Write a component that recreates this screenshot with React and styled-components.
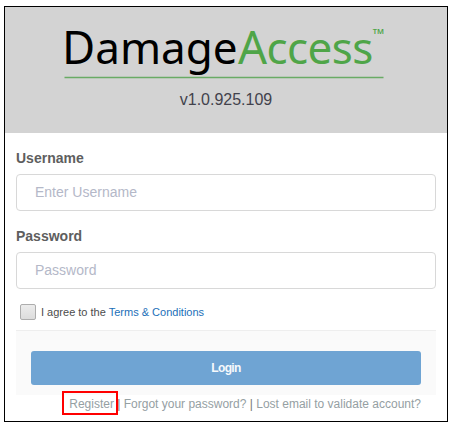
import React from "react";
import styled, { createGlobalStyle } from "styled-components";

const GlobalStyle = createGlobalStyle`
  *, *::after { box-sizing: border-box; }
  body {
    margin: 0;
    background: #fff;
    font-family: "Liberation Sans", Arial, sans-serif;
  }
`;

const Frame = styled.main`
  width: 444px;
  height: 416px;
  margin: 6px 0 0 4px;
  border: 1px solid #000;
  background: #fff;
`;

const Header = styled.header`
  height: 126px;
  background: #d3d3d3;
  display: flex;
  flex-direction: column;
  align-items: center;
`;

const Logo = styled.svg`
  display: block;
  width: 442px;
  height: 78px;
  font-family: "Noto Sans", "Open Sans", sans-serif;
`;

const Version = styled.div`
  margin-top: 5px;
  font-size: 16px;
  line-height: 20px;
  color: #42424c;
`;

const Form = styled.form`
  display: flex;
  flex-direction: column;
  padding: 16px 11px 0;
`;

const Field = styled.label`
  display: flex;
  flex-direction: column;
  height: 78px;
`;

const FieldName = styled.span`
  height: 25px;
  font-size: 14px;
  font-weight: 700;
  line-height: 18px;
  color: #5e5e5e;
`;

const Input = styled.input`
  width: 420px;
  height: 37px;
  padding: 0 18px 2px;
  border: 1px solid #d8d8d8;
  border-radius: 4px;
  background: #fff;
  font-family: inherit;
  font-size: 14px;
  color: #555;
  outline: none;

  &::placeholder {
    color: #b4b8c8;
    opacity: 1;
  }
`;

const Agreement = styled.label`
  display: flex;
  align-items: center;
  gap: 5px;
  height: 16px;
  margin: -1px 0 10px 4px;
  font-size: 11px;
  line-height: 16px;
  color: #4c4c4c;
`;

const Checkbox = styled.input`
  appearance: none;
  width: 16px;
  height: 16px;
  margin: 0;
  border: 1px solid #adadad;
  border-radius: 2px;
  background: linear-gradient(#ececec, #dcdcdc);
`;

const Terms = styled.a`
  color: #1b6fb8;
`;

const Actions = styled.div`
  height: 65px;
  padding: 20px 15px 0;
  border-top: 1px solid #eee;
  background: #fafafa;
`;

const LoginButton = styled.button`
  display: block;
  width: 100%;
  height: 34px;
  padding: 0;
  border: 0;
  border-radius: 3px;
  background: #6fa4d3;
  color: #f6f9fc;
  font: 700 12px/34px "Liberation Sans", Arial, sans-serif;
  letter-spacing: -0.6px;
`;

const Links = styled.nav`
  display: flex;
  justify-content: flex-end;
  padding-right: 15px;
  font-size: 12px;
  line-height: 18px;
  white-space: pre;
  color: #95a0a3;
`;

const Separator = styled.span`
  color: #777;
`;

const Highlighted = styled.a`
  position: relative;

  &::after {
    content: "";
    position: absolute;
    left: -7px;
    top: -4px;
    width: 56px;
    height: 24px;
    border: 2px solid #f00;
  }
`;

function FormField({ name, placeholder, type }) {
  return (
    <Field>
      <FieldName>{name}</FieldName>
      <Input type={type} placeholder={placeholder} />
    </Field>
  );
}

export default function App() {
  return (
    <>
      <GlobalStyle />
      <Frame>
        <Header>
          <Logo viewBox="5 7 442 78">
            <text x="62" y="63.5" fontSize="45.5" fill="#000">D<tspan fontSize="44">amage</tspan></text>
            <text x="238" y="63.5" fontSize="45.5" letterSpacing="-0.6" fill="#4fa548">A<tspan fontSize="44">ccess</tspan><tspan x="372.8" y="34.2" fontSize="7.5" fontWeight="600" letterSpacing="0">TM</tspan></text>
            <path d="M64.5 77.5H383.5" stroke="#69ab65" strokeWidth="1.3" />
          </Logo>
          <Version>v1.0.925.109</Version>
        </Header>
        <Form>
          <FormField name="Username" placeholder="Enter Username" type="text" />
          <FormField name="Password" placeholder="Password" type="password" />
          <Agreement>
            <Checkbox type="checkbox" />
            <span>I agree to the <Terms>Terms &amp; Conditions</Terms></span>
          </Agreement>
          <Actions>
            <LoginButton type="button">Login</LoginButton>
          </Actions>
          <Links>
            <Highlighted>Register</Highlighted>
            <Separator> | </Separator>
            <a>Forgot your password?</a>
            <Separator> | </Separator>
            <a>Lost email to validate account?</a>
          </Links>
        </Form>
      </Frame>
    </>
  );
}
